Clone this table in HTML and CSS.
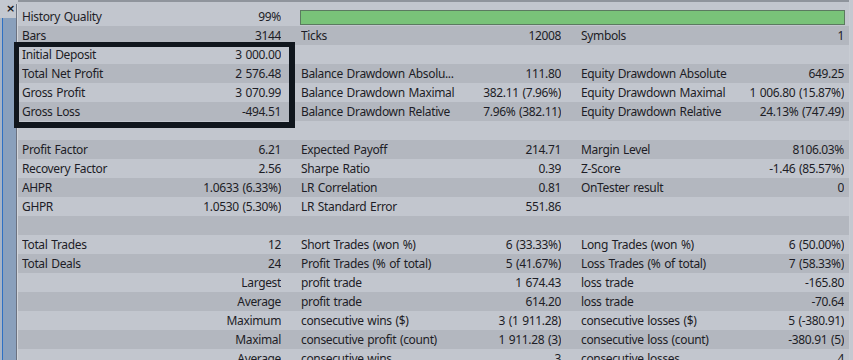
FILE: index.html
```html
<!DOCTYPE html>
<html>
<head>
<meta charset="utf-8">
<link rel="stylesheet" href="styles.css">
</head>
<body>
<div class="app">
  <div class="side">
    <div class="side-top"><span class="close">×</span></div>
    <div class="side-body"><div class="side-line"></div><div class="side-fill"></div></div>
  </div>
  <div class="divider"></div>
  <div class="main">
    <div class="table">
      <div class="row">
        <div class="cell"><span>History Quality</span><span>99%</span></div>
        <div class="bar-cell"><div class="quality-bar"></div></div>
      </div>
      <div class="row">
        <div class="cell"><span>Bars</span><span>3144</span></div>
        <div class="cell"><span>Ticks</span><span>12008</span></div>
        <div class="cell"><span>Symbols</span><span>1</span></div>
      </div>
      <div class="row">
        <div class="cell"><span>Initial Deposit</span><span>3 000.00</span></div>
        <div class="cell"></div>
        <div class="cell"></div>
      </div>
      <div class="row">
        <div class="cell"><span>Total Net Profit</span><span>2 576.48</span></div>
        <div class="cell"><span>Balance Drawdown Absolu...</span><span>111.80</span></div>
        <div class="cell"><span>Equity Drawdown Absolute</span><span>649.25</span></div>
      </div>
      <div class="row">
        <div class="cell"><span>Gross Profit</span><span>3 070.99</span></div>
        <div class="cell"><span>Balance Drawdown Maximal</span><span>382.11 (7.96%)</span></div>
        <div class="cell"><span>Equity Drawdown Maximal</span><span>1 006.80 (15.87%)</span></div>
      </div>
      <div class="row">
        <div class="cell"><span>Gross Loss</span><span>-494.51</span></div>
        <div class="cell"><span>Balance Drawdown Relative</span><span>7.96% (382.11)</span></div>
        <div class="cell"><span>Equity Drawdown Relative</span><span>24.13% (747.49)</span></div>
      </div>
      <div class="row empty"></div>
      <div class="row">
        <div class="cell"><span>Profit Factor</span><span>6.21</span></div>
        <div class="cell"><span>Expected Payoff</span><span>214.71</span></div>
        <div class="cell"><span>Margin Level</span><span>8106.03%</span></div>
      </div>
      <div class="row">
        <div class="cell"><span>Recovery Factor</span><span>2.56</span></div>
        <div class="cell"><span>Sharpe Ratio</span><span>0.39</span></div>
        <div class="cell"><span>Z-Score</span><span>-1.46 (85.57%)</span></div>
      </div>
      <div class="row">
        <div class="cell"><span>AHPR</span><span>1.0633 (6.33%)</span></div>
        <div class="cell"><span>LR Correlation</span><span>0.81</span></div>
        <div class="cell"><span>OnTester result</span><span>0</span></div>
      </div>
      <div class="row">
        <div class="cell"><span>GHPR</span><span>1.0530 (5.30%)</span></div>
        <div class="cell"><span>LR Standard Error</span><span>551.86</span></div>
        <div class="cell"></div>
      </div>
      <div class="row empty"></div>
      <div class="row">
        <div class="cell"><span>Total Trades</span><span>12</span></div>
        <div class="cell"><span>Short Trades (won %)</span><span>6 (33.33%)</span></div>
        <div class="cell"><span>Long Trades (won %)</span><span>6 (50.00%)</span></div>
      </div>
      <div class="row">
        <div class="cell"><span>Total Deals</span><span>24</span></div>
        <div class="cell"><span>Profit Trades (% of total)</span><span>5 (41.67%)</span></div>
        <div class="cell"><span>Loss Trades (% of total)</span><span>7 (58.33%)</span></div>
      </div>
      <div class="row">
        <div class="cell"><span></span><span>Largest</span></div>
        <div class="cell"><span>profit trade</span><span>1 674.43</span></div>
        <div class="cell"><span>loss trade</span><span>-165.80</span></div>
      </div>
      <div class="row">
        <div class="cell"><span></span><span>Average</span></div>
        <div class="cell"><span>profit trade</span><span>614.20</span></div>
        <div class="cell"><span>loss trade</span><span>-70.64</span></div>
      </div>
      <div class="row">
        <div class="cell"><span></span><span>Maximum</span></div>
        <div class="cell"><span>consecutive wins ($)</span><span>3 (1 911.28)</span></div>
        <div class="cell"><span>consecutive losses ($)</span><span>5 (-380.91)</span></div>
      </div>
      <div class="row">
        <div class="cell"><span></span><span>Maximal</span></div>
        <div class="cell"><span>consecutive profit (count)</span><span>1 911.28 (3)</span></div>
        <div class="cell"><span>consecutive loss (count)</span><span>-380.91 (5)</span></div>
      </div>
      <div class="row">
        <div class="cell"><span></span><span>Average</span></div>
        <div class="cell"><span>consecutive wins</span><span>3</span></div>
        <div class="cell"><span>consecutive losses</span><span>4</span></div>
      </div>
    </div>
  </div>
  <div class="right-edge"></div>
  <div class="highlight"></div>
</div>
</body>
</html>
```
FILE: styles.css
```css
html, body {
  margin: 0;
  padding: 0;
  width: 853px;
  height: 360px;
  overflow: hidden;
  background: #c4c8d0;
}

.app {
  position: relative;
  display: flex;
  width: 853px;
  height: 360px;
  font-family: "Noto Sans", "Open Sans", sans-serif;
  font-size: 12px;
  letter-spacing: -0.35px;
  word-spacing: 1px;
  color: #1d1d26;
}

.side {
  width: 16px;
  display: flex;
  flex-direction: column;
  background: #c4c8d0;
}

.side-top {
  height: 18px;
  position: relative;
}

.close {
  position: absolute;
  left: 6px;
  top: 2px;
  font-family: "DejaVu Sans", sans-serif;
  font-weight: bold;
  font-size: 11px;
  line-height: 14px;
  letter-spacing: 0;
  color: #15151a;
}

.side-body {
  flex: 1;
  display: flex;
  padding-left: 2px;
  background: #a7b4c6;
}

.side-line {
  width: 1px;
  background: #2d70c4;
}

.side-fill {
  flex: 1;
  background: #8aa0bc;
}

.divider {
  width: 1px;
  margin-top: 4px;
  background: #6c7280;
  border-right: 1px solid #d2d6dc;
}

.main {
  flex: 1;
  padding-top: 5px;
  border-top: 2px solid #8f949c;
  background: #c2c6ce;
  box-sizing: border-box;
}

.table {
  display: flex;
  flex-direction: column;
}

.row {
  display: grid;
  grid-template-columns: 259px 260px 263px;
  column-gap: 20px;
  padding: 0 4px;
  height: 19px;
  line-height: 19px;
  background: #c2c6ce;
  white-space: nowrap;
}

.row:nth-child(even) {
  background: #b3b7bf;
}

.cell {
  display: flex;
  justify-content: space-between;
  overflow: hidden;
}

.bar-cell {
  grid-column: 2 / 4;
  display: flex;
  align-items: center;
  margin: 0 -1px;
}

.quality-bar {
  width: 100%;
  height: 13px;
  margin-top: 1px;
  background: #79c379;
  border: 1px solid #5b7a60;
}

.right-edge {
  width: 4px;
  background: #c4c8d0;
  border-left: 1px solid #c8ccd3;
  box-sizing: border-box;
}

.highlight {
  position: absolute;
  left: 14px;
  top: 42px;
  width: 281px;
  height: 86px;
  box-sizing: border-box;
  border-style: solid;
  border-color: #10161d;
  border-width: 5px 6px 6px 5px;
}
```
